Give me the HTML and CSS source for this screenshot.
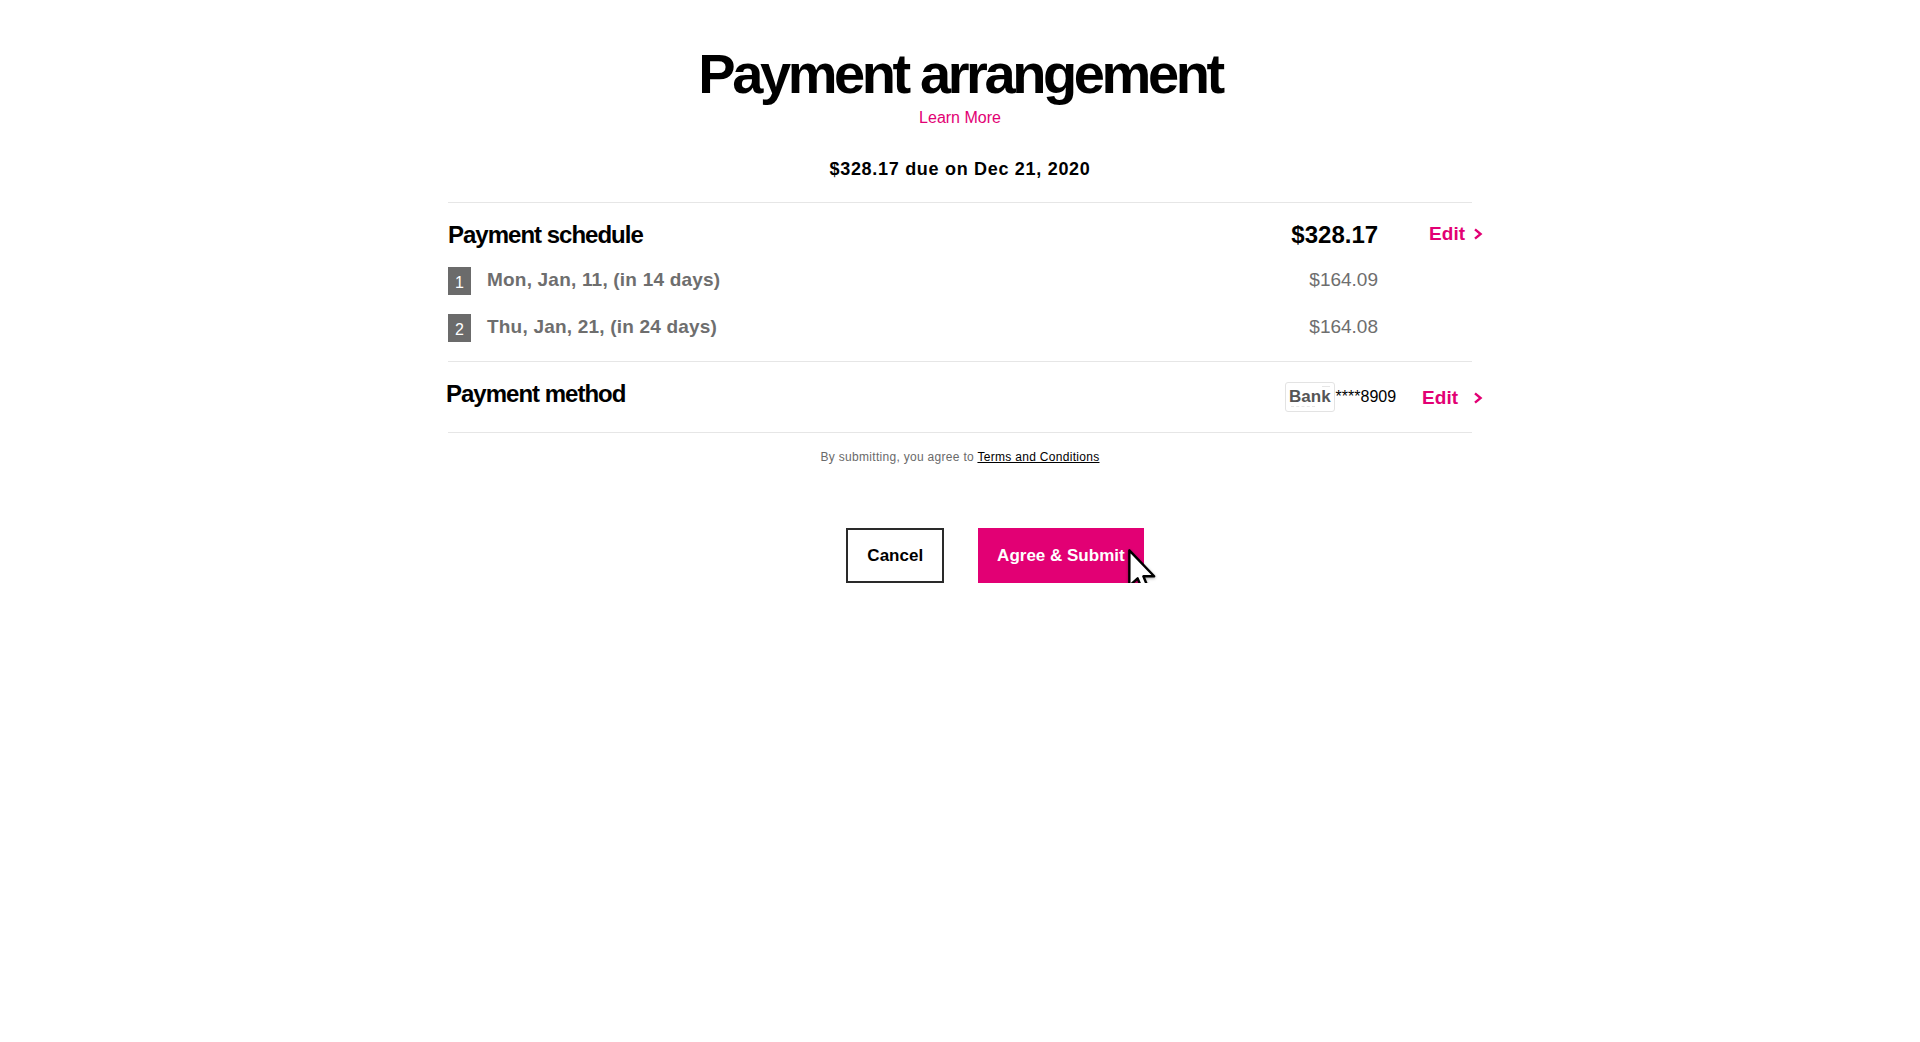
FILE: index.html
```html
<!DOCTYPE html>
<html lang="en">
<head>
<meta charset="utf-8">
<title>Payment arrangement</title>
<link rel="stylesheet" href="styles.css">
</head>
<body>
<main class="page">
  <h1 class="title">Payment arrangement</h1>
  <a class="learn" href="#">Learn More</a>
  <p class="due">$328.17 due on Dec 21, 2020</p>

  <section class="panel">
    <div class="schedule">
      <div class="row-head">
        <h2 class="heading">Payment schedule</h2>
        <span class="total">$328.17</span>
        <a class="edit edit-sched" href="#">Edit<svg class="chev" width="10" height="12" viewBox="0 0 10 12"><path d="M2 1.3 L7.6 6 L2 10.7" fill="none" stroke="#e20074" stroke-width="2.4" stroke-linejoin="miter"/></svg></a>
      </div>
      <ol class="installments">
        <li class="inst">
          <span class="badge">1</span>
          <span class="date">Mon, Jan, 11, (in 14 days)</span>
          <span class="amt">$164.09</span>
        </li>
        <li class="inst">
          <span class="badge">2</span>
          <span class="date">Thu, Jan, 21, (in 24 days)</span>
          <span class="amt">$164.08</span>
        </li>
      </ol>
    </div>

    <div class="method">
      <h2 class="heading">Payment method</h2>
      <span class="bank">Bank</span>
      <span class="acct">****8909</span>
      <a class="edit edit-method" href="#">Edit<svg class="chev" width="10" height="12" viewBox="0 0 10 12"><path d="M2 1.3 L7.6 6 L2 10.7" fill="none" stroke="#e20074" stroke-width="2.4" stroke-linejoin="miter"/></svg></a>
    </div>
  </section>

  <p class="terms">By submitting, you agree to <a class="terms-link" href="#">Terms and Conditions</a></p>

  <div class="actions">
    <button class="btn btn-cancel" type="button">Cancel</button>
    <div class="submit-wrap">
      <button class="btn btn-submit" type="button">Agree &amp; Submit</button>
      <svg class="cursor" width="30" height="46" viewBox="0 0 13 20">
        <polygon points="1,1 1,16.5 4.6,13.2 6.9,18.6 9.3,17.6 7.1,12.3 11.8,12.3" fill="#fff" stroke="#000" stroke-width="1.05" stroke-linejoin="round"/>
      </svg>
    </div>
  </div>
</main>
</body>
</html>
```

FILE: styles.css
```css
html, body {
  margin: 0;
  padding: 0;
  background: #ffffff;
}

body {
  font-family: "Liberation Sans", Arial, Helvetica, sans-serif;
  color: #000;
}

.page {
  display: flex;
  flex-direction: column;
  align-items: center;
  padding-top: 46px;
}

.title {
  margin: 0;
  font-size: 56px;
  line-height: 56px;
  font-weight: 700;
  letter-spacing: -3.4px;
  color: #000;
}

.learn {
  margin-top: 6px;
  font-size: 16px;
  line-height: 20px;
  color: #e20074;
  text-decoration: none;
}

.due {
  margin: 29px 0 0;
  font-size: 18px;
  line-height: 24px;
  font-weight: 700;
  letter-spacing: 0.7px;
}

.panel {
  width: 1024px;
  margin-top: 21px;
  border-top: 1px solid #e6e6e6;
}

.schedule {
  padding: 17px 0 19px;
  border-bottom: 1px solid #e6e6e6;
}

.row-head {
  display: flex;
  align-items: baseline;
}

.heading {
  margin: 0;
  flex: 1;
  font-size: 24px;
  line-height: 30px;
  font-weight: 700;
  letter-spacing: -1px;
}

.total {
  font-size: 24px;
  line-height: 30px;
  font-weight: 700;
}

.edit {
  display: inline-flex;
  align-items: center;
  font-size: 19px;
  line-height: 22px;
  font-weight: 700;
  color: #e20074;
  text-decoration: none;
}

.edit-sched {
  align-self: flex-start;
  margin-top: 3px;
  margin-left: 51px;
  margin-right: -11px;
  gap: 8px;
}

.edit-method {
  align-self: flex-start;
  margin-top: 8px;
  margin-left: 26px;
  margin-right: -11px;
  gap: 15px;
}

.chev {
  display: block;
}

.installments {
  list-style: none;
  margin: 17px 0 0;
  padding: 0;
  display: flex;
  flex-direction: column;
  gap: 19px;
}

.inst {
  display: flex;
  align-items: flex-start;
  height: 28px;
}

.badge {
  width: 23px;
  height: 28px;
  background: #6b6b6b;
  color: #fff;
  font-size: 16px;
  display: flex;
  align-items: center;
  justify-content: center;
  padding-top: 3px;
  box-sizing: border-box;
}

.date {
  margin-left: 16px;
  font-size: 19px;
  line-height: 25px;
  font-weight: 700;
  letter-spacing: 0.2px;
  color: #6e6e6e;
}

.amt {
  margin-left: auto;
  margin-right: 94px;
  font-size: 19px;
  line-height: 25px;
  color: #6e6e6e;
}

.method {
  display: flex;
  align-items: baseline;
  padding: 17px 0 20px;
  border-bottom: 1px solid #e6e6e6;
}

.method .heading {
  margin-left: -2px;
}

.bank {
  position: relative;
  border: 1px solid #e3e3e3;
  border-radius: 3px;
  padding: 4px 3px;
  font-size: 17px;
  line-height: 20px;
  font-weight: 700;
  color: #555;
}

.bank::before {
  content: "";
  position: absolute;
  top: 3px;
  right: 4px;
  width: 8px;
  height: 1px;
  background: #e6e6e6;
}

.bank::after {
  content: "";
  position: absolute;
  left: 5px;
  bottom: 4px;
  width: 24px;
  border-top: 1px dashed #e6e6e6;
}

.acct {
  margin-left: 1px;
  font-size: 16px;
  color: #000;
}

.terms {
  margin: 16px 0 0;
  font-size: 12px;
  line-height: 16px;
  letter-spacing: 0.3px;
  color: #6a6a6a;
}

.terms-link {
  color: #000;
  text-decoration: underline;
}

.actions {
  margin-top: 63px;
  display: flex;
  gap: 34px;
  padding-left: 70px;
}

.btn {
  font-family: "Liberation Sans", Arial, Helvetica, sans-serif;
  font-size: 17px;
  font-weight: 700;
  height: 55px;
  padding: 0 19px;
  cursor: pointer;
  border-radius: 0;
  margin: 0;
}

.btn-cancel {
  background: #fff;
  color: #000;
  border: 2px solid #2a2a2a;
}

.btn-submit {
  background: #e20074;
  color: #fff;
  border: none;
}

.submit-wrap {
  position: relative;
}

.cursor {
  position: absolute;
  left: 149px;
  top: 20px;
  filter: drop-shadow(0 1px 1.5px rgba(0, 0, 0, 0.35));
}
```
